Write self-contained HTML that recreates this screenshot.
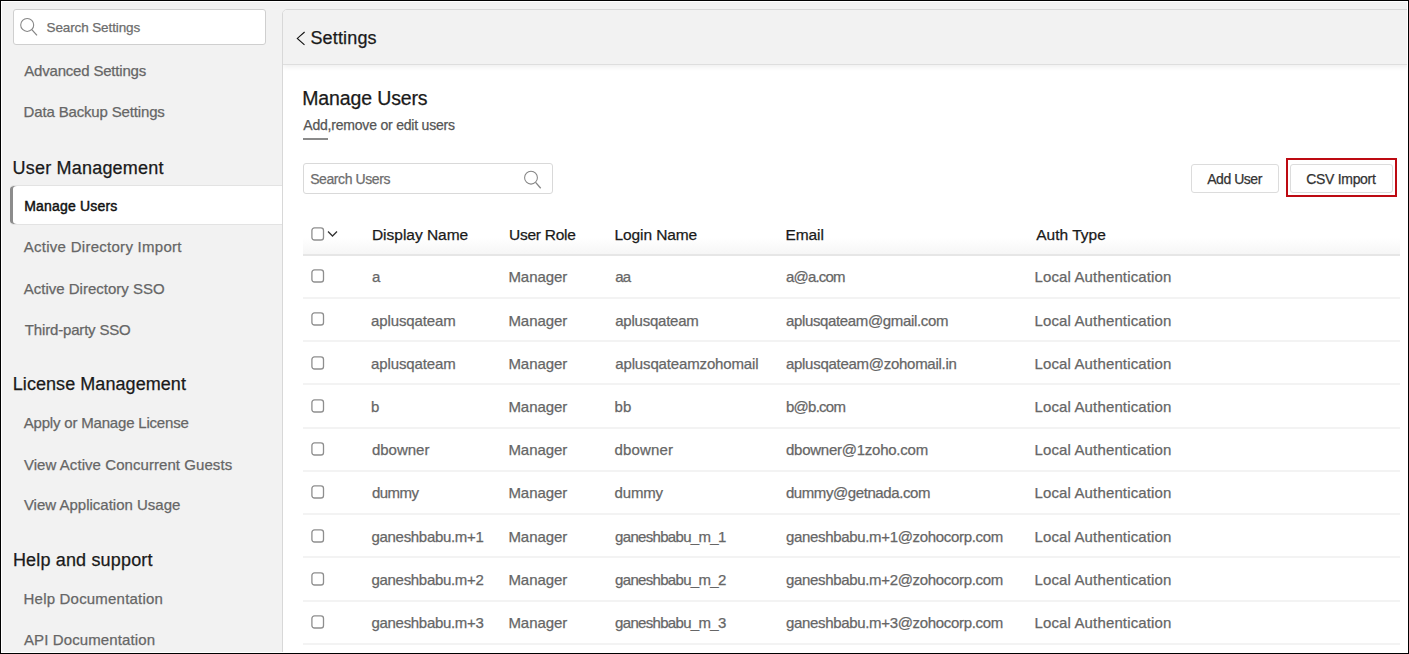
<!DOCTYPE html>
<html><head><meta charset="utf-8"><style>
html,body{margin:0;padding:0}
body{width:1409px;height:654px;position:relative;overflow:hidden;background:#f2f2f2;font-family:"Liberation Sans",sans-serif}
.t{position:absolute;white-space:nowrap;-webkit-text-stroke-width:0.25px}
.box{position:absolute;box-sizing:content-box}
.ico{position:absolute}
.cb{position:absolute;width:9px;height:9px;border:2px solid #8e8e8e;border-radius:3px;background:#fff}
.frame{position:absolute;left:0;top:0;width:1407px;height:652px;border:1px solid #000;box-shadow:inset 0 0 0 1px #fff;z-index:10;pointer-events:none}
</style></head><body>
<!-- sidebar search -->
<div class="box" style="left:13px;top:9px;width:251px;height:34px;border:1px solid #cfcfcf;border-radius:3px;background:#fff"></div>
<svg class="ico" style="left:18px;top:16px" width="22" height="22" viewBox="0 0 22 22"><circle cx="9.2" cy="8.9" r="6.5" fill="none" stroke="#858585" stroke-width="1.05"/><line x1="13.8" y1="13.6" x2="19" y2="19.4" stroke="#858585" stroke-width="1.25"/></svg>
<!-- active item -->
<div class="box" style="left:10px;top:185px;width:272px;height:38px;background:#fff;border-top:1px solid #e3e3e3;border-bottom:1px solid #e3e3e3;border-radius:4px 0 0 4px;box-shadow:inset 3px 0 0 #8c8c8c"></div>
<!-- main panel -->
<div class="box" style="left:282px;top:9px;width:1140px;height:660px;background:#fff;border:1px solid #d8d8d8;border-radius:5px 0 0 0;overflow:hidden"><div style="position:absolute;left:0;top:0;right:0;height:54px;background:#f2f2f2;border-bottom:1px solid #dedede;box-shadow:0 2px 5px rgba(0,0,0,0.07)"></div></div>
<svg class="ico" style="left:295px;top:31px" width="12" height="16" viewBox="0 0 12 16"><polyline points="9.6,1 2.3,7.4 9.5,13.8" fill="none" stroke="#111" stroke-width="1.1"/></svg>
<div class="box" style="left:303px;top:138px;width:25px;height:2px;background:#8a8a8a"></div>
<!-- search users -->
<div class="box" style="left:303px;top:163px;width:248px;height:29px;border:1px solid #d9d9d9;border-radius:3px;background:#fff"></div>
<svg class="ico" style="left:520px;top:167px" width="24" height="24" viewBox="0 0 24 24"><circle cx="11" cy="10.7" r="6.4" fill="none" stroke="#858585" stroke-width="1.05"/><line x1="15.6" y1="15.4" x2="20.7" y2="21.3" stroke="#858585" stroke-width="1.3"/></svg>
<!-- buttons -->
<div class="box" style="left:1191px;top:164px;width:86px;height:27px;border:1px solid #dcdcdc;border-radius:3px;background:#fff"></div>
<div class="box" style="left:1286px;top:158px;width:107px;height:35px;border:2px solid #bd0a12"></div>
<div class="box" style="left:1290px;top:164px;width:101px;height:27px;border:1px solid #dcdcdc;border-radius:3px;background:#fff"></div>
<!-- table header -->
<div class="box" style="left:303px;top:212px;width:1097px;height:42px;background:linear-gradient(#fff 0%,#fff 60%,#f6f6f6 100%);border-bottom:2px solid #e6e6e6"></div>
<svg class="ico" style="left:310.5px;top:226.8px" width="14" height="14" viewBox="0 0 14 14"><rect x="0.9" y="0.9" width="11.6" height="12.1" rx="2.6" fill="#fff" stroke="#8e8e8e" stroke-width="1.3"/></svg>
<svg class="ico" style="left:326px;top:229px" width="13" height="10" viewBox="0 0 13 10"><polyline points="2,2.5 6.5,7 11,2.5" fill="none" stroke="#333" stroke-width="1.3"/></svg>
<div class="box" style="left:303px;top:296.90px;width:1097px;height:2px;background:#f3f3f3"></div>
<svg class="ico" style="left:310.5px;top:269.05px" width="14" height="14" viewBox="0 0 14 14"><rect x="0.9" y="0.9" width="11.6" height="12.1" rx="2.6" fill="#fff" stroke="#8e8e8e" stroke-width="1.3"/></svg>
<div class="box" style="left:303px;top:340.15px;width:1097px;height:2px;background:#f3f3f3"></div>
<svg class="ico" style="left:310.5px;top:312.30px" width="14" height="14" viewBox="0 0 14 14"><rect x="0.9" y="0.9" width="11.6" height="12.1" rx="2.6" fill="#fff" stroke="#8e8e8e" stroke-width="1.3"/></svg>
<div class="box" style="left:303px;top:383.40px;width:1097px;height:2px;background:#f3f3f3"></div>
<svg class="ico" style="left:310.5px;top:355.55px" width="14" height="14" viewBox="0 0 14 14"><rect x="0.9" y="0.9" width="11.6" height="12.1" rx="2.6" fill="#fff" stroke="#8e8e8e" stroke-width="1.3"/></svg>
<div class="box" style="left:303px;top:426.65px;width:1097px;height:2px;background:#f3f3f3"></div>
<svg class="ico" style="left:310.5px;top:398.80px" width="14" height="14" viewBox="0 0 14 14"><rect x="0.9" y="0.9" width="11.6" height="12.1" rx="2.6" fill="#fff" stroke="#8e8e8e" stroke-width="1.3"/></svg>
<div class="box" style="left:303px;top:469.90px;width:1097px;height:2px;background:#f3f3f3"></div>
<svg class="ico" style="left:310.5px;top:442.05px" width="14" height="14" viewBox="0 0 14 14"><rect x="0.9" y="0.9" width="11.6" height="12.1" rx="2.6" fill="#fff" stroke="#8e8e8e" stroke-width="1.3"/></svg>
<div class="box" style="left:303px;top:513.15px;width:1097px;height:2px;background:#f3f3f3"></div>
<svg class="ico" style="left:310.5px;top:485.30px" width="14" height="14" viewBox="0 0 14 14"><rect x="0.9" y="0.9" width="11.6" height="12.1" rx="2.6" fill="#fff" stroke="#8e8e8e" stroke-width="1.3"/></svg>
<div class="box" style="left:303px;top:556.40px;width:1097px;height:2px;background:#f3f3f3"></div>
<svg class="ico" style="left:310.5px;top:528.55px" width="14" height="14" viewBox="0 0 14 14"><rect x="0.9" y="0.9" width="11.6" height="12.1" rx="2.6" fill="#fff" stroke="#8e8e8e" stroke-width="1.3"/></svg>
<div class="box" style="left:303px;top:599.65px;width:1097px;height:2px;background:#f3f3f3"></div>
<svg class="ico" style="left:310.5px;top:571.80px" width="14" height="14" viewBox="0 0 14 14"><rect x="0.9" y="0.9" width="11.6" height="12.1" rx="2.6" fill="#fff" stroke="#8e8e8e" stroke-width="1.3"/></svg>
<div class="box" style="left:303px;top:642.90px;width:1097px;height:2px;background:#f3f3f3"></div>
<svg class="ico" style="left:310.5px;top:615.05px" width="14" height="14" viewBox="0 0 14 14"><rect x="0.9" y="0.9" width="11.6" height="12.1" rx="2.6" fill="#fff" stroke="#8e8e8e" stroke-width="1.3"/></svg>

<div class="t" style="left:46.52px;top:19px;font-size:13.5px;line-height:18px;color:#6d6d6d;letter-spacing:-0.116px;font-weight:normal;">Search Settings</div>
<div class="t" style="left:24.23px;top:61px;font-size:15px;line-height:20px;color:#666;letter-spacing:-0.191px;font-weight:normal;">Advanced Settings</div>
<div class="t" style="left:23.57px;top:102px;font-size:15px;line-height:20px;color:#666;letter-spacing:-0.156px;font-weight:normal;">Data Backup Settings</div>
<div class="t" style="left:12.62px;top:157px;font-size:18px;line-height:23px;color:#1a1a1a;letter-spacing:0.193px;font-weight:normal;">User Management</div>
<div class="t" style="left:24.14px;top:197px;font-size:14px;line-height:18px;color:#111;letter-spacing:0.196px;font-weight:normal;-webkit-text-stroke-width:0.45px">Manage Users</div>
<div class="t" style="left:23.71px;top:237px;font-size:15px;line-height:20px;color:#666;letter-spacing:0.278px;font-weight:normal;">Active Directory Import</div>
<div class="t" style="left:23.71px;top:279px;font-size:15px;line-height:20px;color:#666;letter-spacing:0.005px;font-weight:normal;">Active Directory SSO</div>
<div class="t" style="left:24.85px;top:320px;font-size:15px;line-height:20px;color:#666;letter-spacing:-0.174px;font-weight:normal;">Third-party SSO</div>
<div class="t" style="left:12.81px;top:373px;font-size:18px;line-height:23px;color:#1a1a1a;letter-spacing:0.058px;font-weight:normal;">License Management</div>
<div class="t" style="left:23.71px;top:413px;font-size:15px;line-height:20px;color:#666;letter-spacing:-0.188px;font-weight:normal;">Apply or Manage License</div>
<div class="t" style="left:23.90px;top:455px;font-size:15px;line-height:20px;color:#666;letter-spacing:0.064px;font-weight:normal;">View Active Concurrent Guests</div>
<div class="t" style="left:23.90px;top:495px;font-size:15px;line-height:20px;color:#666;letter-spacing:0.000px;font-weight:normal;">View Application Usage</div>
<div class="t" style="left:12.95px;top:549px;font-size:18px;line-height:23px;color:#1a1a1a;letter-spacing:0.162px;font-weight:normal;">Help and support</div>
<div class="t" style="left:23.57px;top:589px;font-size:15px;line-height:20px;color:#666;letter-spacing:0.196px;font-weight:normal;">Help Documentation</div>
<div class="t" style="left:23.90px;top:630px;font-size:15px;line-height:20px;color:#666;letter-spacing:0.124px;font-weight:normal;">API Documentation</div>
<div class="t" style="left:310.38px;top:27px;font-size:18px;line-height:23px;color:#1a1a1a;letter-spacing:0.167px;font-weight:normal;">Settings</div>
<div class="t" style="left:302.24px;top:86px;font-size:19.5px;line-height:25px;color:#1a1a1a;letter-spacing:-0.131px;font-weight:normal;">Manage Users</div>
<div class="t" style="left:303.28px;top:116px;font-size:14px;line-height:18px;color:#555;letter-spacing:-0.203px;font-weight:normal;">Add,remove or edit users</div>
<div class="t" style="left:310.19px;top:170px;font-size:14px;line-height:18px;color:#6d6d6d;letter-spacing:-0.409px;font-weight:normal;">Search Users</div>
<div class="t" style="left:1207.23px;top:170px;font-size:14px;line-height:18px;color:#333;letter-spacing:-0.463px;font-weight:normal;">Add User</div>
<div class="t" style="left:1306.28px;top:170px;font-size:14px;line-height:18px;color:#333;letter-spacing:-0.310px;font-weight:normal;">CSV Import</div>
<div class="t" style="left:371.95px;top:225px;font-size:15.5px;line-height:20px;color:#1a1a1a;letter-spacing:-0.016px;font-weight:normal;">Display Name</div>
<div class="t" style="left:508.95px;top:225px;font-size:15.5px;line-height:20px;color:#1a1a1a;letter-spacing:-0.248px;font-weight:normal;">User Role</div>
<div class="t" style="left:614.57px;top:225px;font-size:15.5px;line-height:20px;color:#1a1a1a;letter-spacing:-0.100px;font-weight:normal;">Login Name</div>
<div class="t" style="left:785.38px;top:225px;font-size:15.5px;line-height:20px;color:#1a1a1a;letter-spacing:-0.045px;font-weight:normal;">Email</div>
<div class="t" style="left:1036.23px;top:225px;font-size:15.5px;line-height:20px;color:#1a1a1a;letter-spacing:0.011px;font-weight:normal;">Auth Type</div>
<div class="t" style="left:371.90px;top:267px;font-size:15px;line-height:20px;color:#666;letter-spacing:0.000px;font-weight:normal;">a</div>
<div class="t" style="left:508.43px;top:267px;font-size:15px;line-height:20px;color:#666;letter-spacing:-0.060px;font-weight:normal;">Manager</div>
<div class="t" style="left:615.29px;top:267px;font-size:15px;line-height:20px;color:#666;letter-spacing:-0.800px;font-weight:normal;">aa</div>
<div class="t" style="left:785.95px;top:267px;font-size:15px;line-height:20px;color:#666;letter-spacing:-0.800px;font-weight:normal;">a@a.com</div>
<div class="t" style="left:1034.43px;top:267px;font-size:15px;line-height:20px;color:#666;letter-spacing:0.142px;font-weight:normal;">Local Authentication</div>
<div class="t" style="left:370.95px;top:311px;font-size:15px;line-height:20px;color:#666;letter-spacing:-0.099px;font-weight:normal;">aplusqateam</div>
<div class="t" style="left:508.43px;top:311px;font-size:15px;line-height:20px;color:#666;letter-spacing:-0.060px;font-weight:normal;">Manager</div>
<div class="t" style="left:615.28px;top:311px;font-size:15px;line-height:20px;color:#666;letter-spacing:-0.234px;font-weight:normal;">aplusqateam</div>
<div class="t" style="left:785.95px;top:311px;font-size:15px;line-height:20px;color:#666;letter-spacing:-0.351px;font-weight:normal;">aplusqateam@gmail.com</div>
<div class="t" style="left:1034.43px;top:311px;font-size:15px;line-height:20px;color:#666;letter-spacing:0.142px;font-weight:normal;">Local Authentication</div>
<div class="t" style="left:370.95px;top:354px;font-size:15px;line-height:20px;color:#666;letter-spacing:-0.099px;font-weight:normal;">aplusqateam</div>
<div class="t" style="left:508.43px;top:354px;font-size:15px;line-height:20px;color:#666;letter-spacing:-0.060px;font-weight:normal;">Manager</div>
<div class="t" style="left:615.28px;top:354px;font-size:15px;line-height:20px;color:#666;letter-spacing:-0.145px;font-weight:normal;">aplusqateamzohomail</div>
<div class="t" style="left:785.95px;top:354px;font-size:15px;line-height:20px;color:#666;letter-spacing:-0.278px;font-weight:normal;">aplusqateam@zohomail.in</div>
<div class="t" style="left:1034.43px;top:354px;font-size:15px;line-height:20px;color:#666;letter-spacing:0.142px;font-weight:normal;">Local Authentication</div>
<div class="t" style="left:371.00px;top:397px;font-size:15px;line-height:20px;color:#666;letter-spacing:0.000px;font-weight:normal;">b</div>
<div class="t" style="left:508.43px;top:397px;font-size:15px;line-height:20px;color:#666;letter-spacing:-0.060px;font-weight:normal;">Manager</div>
<div class="t" style="left:614.57px;top:397px;font-size:15px;line-height:20px;color:#666;letter-spacing:0.180px;font-weight:normal;">bb</div>
<div class="t" style="left:785.95px;top:397px;font-size:15px;line-height:20px;color:#666;letter-spacing:-0.740px;font-weight:normal;">b@b.com</div>
<div class="t" style="left:1034.43px;top:397px;font-size:15px;line-height:20px;color:#666;letter-spacing:0.142px;font-weight:normal;">Local Authentication</div>
<div class="t" style="left:371.90px;top:440px;font-size:15px;line-height:20px;color:#666;letter-spacing:0.000px;font-weight:normal;">dbowner</div>
<div class="t" style="left:508.43px;top:440px;font-size:15px;line-height:20px;color:#666;letter-spacing:-0.060px;font-weight:normal;">Manager</div>
<div class="t" style="left:614.57px;top:440px;font-size:15px;line-height:20px;color:#666;letter-spacing:0.135px;font-weight:normal;">dbowner</div>
<div class="t" style="left:785.95px;top:440px;font-size:15px;line-height:20px;color:#666;letter-spacing:-0.247px;font-weight:normal;">dbowner@1zoho.com</div>
<div class="t" style="left:1034.43px;top:440px;font-size:15px;line-height:20px;color:#666;letter-spacing:0.142px;font-weight:normal;">Local Authentication</div>
<div class="t" style="left:371.90px;top:483px;font-size:15px;line-height:20px;color:#666;letter-spacing:-0.495px;font-weight:normal;">dummy</div>
<div class="t" style="left:508.43px;top:483px;font-size:15px;line-height:20px;color:#666;letter-spacing:-0.060px;font-weight:normal;">Manager</div>
<div class="t" style="left:614.57px;top:483px;font-size:15px;line-height:20px;color:#666;letter-spacing:-0.157px;font-weight:normal;">dummy</div>
<div class="t" style="left:785.95px;top:483px;font-size:15px;line-height:20px;color:#666;letter-spacing:-0.416px;font-weight:normal;">dummy@getnada.com</div>
<div class="t" style="left:1034.43px;top:483px;font-size:15px;line-height:20px;color:#666;letter-spacing:0.142px;font-weight:normal;">Local Authentication</div>
<div class="t" style="left:371.52px;top:527px;font-size:15px;line-height:20px;color:#666;letter-spacing:-0.312px;font-weight:normal;">ganeshbabu.m+1</div>
<div class="t" style="left:508.43px;top:527px;font-size:15px;line-height:20px;color:#666;letter-spacing:-0.060px;font-weight:normal;">Manager</div>
<div class="t" style="left:615.09px;top:527px;font-size:15px;line-height:20px;color:#666;letter-spacing:-0.685px;font-weight:normal;">ganeshbabu_m_1</div>
<div class="t" style="left:785.90px;top:527px;font-size:15px;line-height:20px;color:#666;letter-spacing:-0.325px;font-weight:normal;">ganeshbabu.m+1@zohocorp.com</div>
<div class="t" style="left:1034.43px;top:527px;font-size:15px;line-height:20px;color:#666;letter-spacing:0.142px;font-weight:normal;">Local Authentication</div>
<div class="t" style="left:371.52px;top:570px;font-size:15px;line-height:20px;color:#666;letter-spacing:-0.312px;font-weight:normal;">ganeshbabu.m+2</div>
<div class="t" style="left:508.43px;top:570px;font-size:15px;line-height:20px;color:#666;letter-spacing:-0.060px;font-weight:normal;">Manager</div>
<div class="t" style="left:615.09px;top:570px;font-size:15px;line-height:20px;color:#666;letter-spacing:-0.685px;font-weight:normal;">ganeshbabu_m_2</div>
<div class="t" style="left:785.90px;top:570px;font-size:15px;line-height:20px;color:#666;letter-spacing:-0.325px;font-weight:normal;">ganeshbabu.m+2@zohocorp.com</div>
<div class="t" style="left:1034.43px;top:570px;font-size:15px;line-height:20px;color:#666;letter-spacing:0.142px;font-weight:normal;">Local Authentication</div>
<div class="t" style="left:371.52px;top:613px;font-size:15px;line-height:20px;color:#666;letter-spacing:-0.312px;font-weight:normal;">ganeshbabu.m+3</div>
<div class="t" style="left:508.43px;top:613px;font-size:15px;line-height:20px;color:#666;letter-spacing:-0.060px;font-weight:normal;">Manager</div>
<div class="t" style="left:615.09px;top:613px;font-size:15px;line-height:20px;color:#666;letter-spacing:-0.685px;font-weight:normal;">ganeshbabu_m_3</div>
<div class="t" style="left:785.90px;top:613px;font-size:15px;line-height:20px;color:#666;letter-spacing:-0.325px;font-weight:normal;">ganeshbabu.m+3@zohocorp.com</div>
<div class="t" style="left:1034.43px;top:613px;font-size:15px;line-height:20px;color:#666;letter-spacing:0.142px;font-weight:normal;">Local Authentication</div>
<div class="frame"></div>
</body></html>
